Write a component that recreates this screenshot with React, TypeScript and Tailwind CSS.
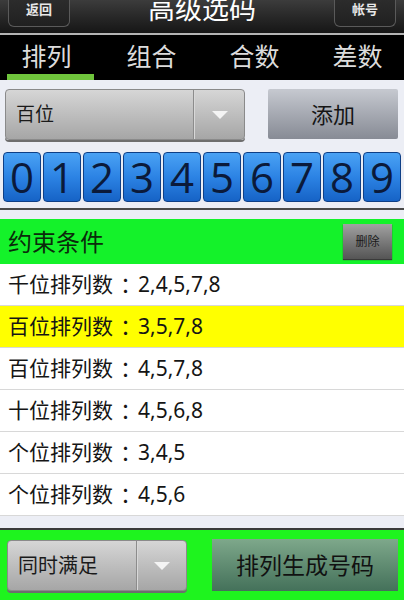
import React from "react";

const font = { fontFamily: '"Noto Sans", "Noto Sans CJK SC", sans-serif' };

const tabs = ["排列", "组合", "合数", "差数"];
const digits = ["0", "1", "2", "3", "4", "5", "6", "7", "8", "9"];
const rules = [
  { pos: "千位排列数", nums: "2,4,5,7,8", active: false },
  { pos: "百位排列数", nums: "3,5,7,8", active: true },
  { pos: "百位排列数", nums: "4,5,7,8", active: false },
  { pos: "十位排列数", nums: "4,5,6,8", active: false },
  { pos: "个位排列数", nums: "3,4,5", active: false },
  { pos: "个位排列数", nums: "4,5,6", active: false },
];

function Caret() {
  return (
    <svg width="18" height="10" viewBox="0 0 18 10">
      <path d="M1 1 L17 1 L9 9 Z" fill="#f4f4f4" />
    </svg>
  );
}

function Spinner({ label, width, split, size }: { label: string; width: string; split: string; size: string }) {
  return (
    <div
      className={`flex h-[51px] ${width} rounded-[4px] border border-[#8a8a8a] bg-gradient-to-b from-[#d6d6d6] to-[#a6a6a6] shadow-[0_2px_0_#6e6e6e]`}
    >
      <div className={`flex ${split} items-center border-r border-r-[#8c8c8c] pl-[10px] text-[#1a1a1a] ${size}`}>
        {label}
      </div>
      <div className="flex flex-1 items-center justify-center border-l border-l-[#d8d8d8]">
        <Caret />
      </div>
    </div>
  );
}

export default function App() {
  return (
    <div className="flex h-[600px] w-[404px] flex-col overflow-hidden bg-[#eceef5]" style={font}>
      {/* title bar */}
      <div className="relative flex h-[35px] items-start justify-between border-b-2 border-b-[#b4b4b4] bg-gradient-to-b from-[#3c3c3c] to-[#161616] px-[8px]">
        <div className="flex h-[27px] w-[62px] items-start justify-center rounded-b-[6px] border border-t-0 border-[#5a5a5a] bg-gradient-to-b from-[#2c2c2c] to-[#202020] pt-[1px] text-[13px] font-bold leading-[16px] text-[#e8e8e8]">
          返回
        </div>
        <div className="mt-[-7px] text-[27px] leading-[32px] text-white">高级选码</div>
        <div className="flex h-[27px] w-[62px] items-start justify-center rounded-b-[6px] border border-t-0 border-[#5a5a5a] bg-gradient-to-b from-[#2c2c2c] to-[#202020] pt-[1px] text-[13px] font-bold leading-[16px] text-[#e8e8e8]">
          帐号
        </div>
      </div>

      {/* tabs */}
      <div className="grid h-[45px] grid-cols-4 bg-black">
        {tabs.map((t, i) => (
          <div key={t} className="flex flex-col">
            <div className="flex flex-1 items-center justify-center pt-[4px] text-[25px] leading-none text-[#dcdcdc]">
              <span className={i === 0 ? "mr-[8px]" : i === 1 ? "ml-[0px]" : i === 2 ? "ml-[4px]" : "ml-[8px]"}>{t}</span>
            </div>
            <div className={i === 0 ? "mx-[7px] h-[6px] bg-[#6fc43c]" : "h-[6px]"} />
          </div>
        ))}
      </div>

      {/* selectors */}
      <div className="flex items-start justify-between px-[5px] pt-[9px] pr-[6px]">
        <Spinner label="百位" width="w-[240px]" split="w-[188px]" size="text-[19px]" />
        <div className="flex h-[50px] w-[130px] items-center justify-center rounded-[2px] bg-gradient-to-b from-[#c6c9d0] to-[#878b95] text-[22px] text-[#151515]">
          添加
        </div>
      </div>

      {/* digits */}
      <div className="mt-[12px] flex gap-[2px] px-[3px]">
        {digits.map((d) => (
          <div
            key={d}
            className="flex h-[50px] w-[38px] items-center justify-center rounded-[4px] border border-[#0e3f86] bg-gradient-to-b from-[#4aa2f4] via-[#2c83e4] to-[#1663c6] text-[42px] leading-none text-[#0b1a3a]"
            style={{ fontFamily: '"Open Sans", "Noto Sans", sans-serif' }}
          >
            {d}
          </div>
        ))}
      </div>

      <div className="mt-[6px] h-[2px] bg-[#4a4a4a]" />

      {/* constraint header */}
      <div className="mt-[9px] flex h-[45px] items-center justify-between bg-[#14f22a] pl-[8px] pr-[12px]">
        <span className="text-[24px] text-[#0b2b0b]">约束条件</span>
        <div className="flex h-[35px] w-[49px] items-center justify-center bg-gradient-to-b from-[#a2a2a2] to-[#555] text-[12px] text-[#1a1a1a] shadow-[0_1px_1px_#3a3a3a]">
          删除
        </div>
      </div>

      {/* rule list */}
      <div className="flex flex-col">
        {rules.map((r, i) => (
          <div
            key={i}
            className={`flex h-[42px] items-center border-b border-b-[#d8d8d8] pl-[8px] text-[21px] text-[#151515] ${
              r.active ? "bg-[#ffff00]" : "bg-white"
            }`}
          >
            {r.pos}
            <span className="mx-[2px]" style={{ fontFamily: '"Noto Sans CJK TC", sans-serif' }}>
              ：
            </span>
            {r.nums}
          </div>
        ))}
      </div>

      <div className="flex-1" />
      <div className="h-[2px] bg-[#3a3a3a]" />

      {/* bottom bar */}
      <div className="flex h-[70px] items-start justify-between bg-[#1ef41e] pl-[7px] pr-[6px] pt-[9px]">
        <div className="mt-[1px]">
          <Spinner label="同时满足" width="w-[180px]" split="w-[129px]" size="text-[20px]" />
        </div>
        <div className="flex h-[52px] w-[186px] items-center justify-center bg-gradient-to-b from-[#7ea88b] to-[#44715a] text-[23px] text-[#111]">
          排列生成号码
        </div>
      </div>
    </div>
  );
}
